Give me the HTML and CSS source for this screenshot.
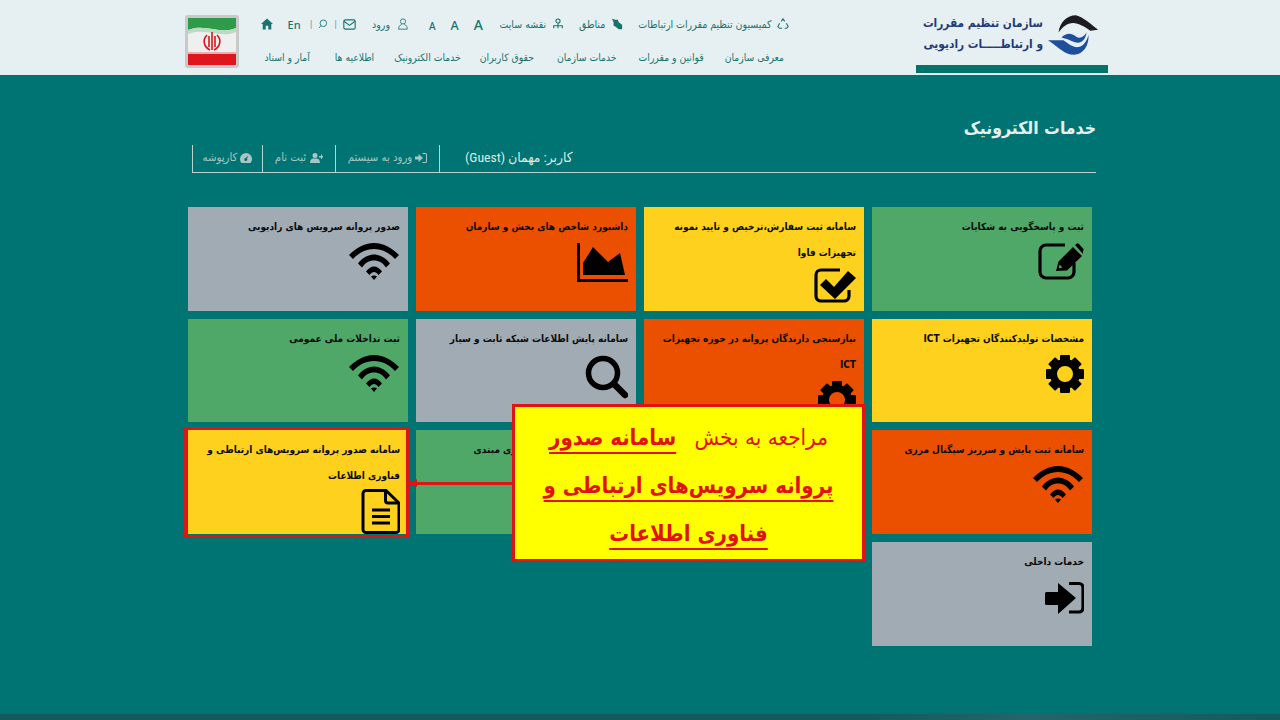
FILE: index.html
```html
<!DOCTYPE html>
<html lang="fa" dir="rtl">
<head>
<meta charset="utf-8">
<title>خدمات الکترونیک</title>
<link rel="stylesheet" href="styles.css">
</head>
<body>
<svg class="sprite" xmlns="http://www.w3.org/2000/svg">
  <symbol id="i-wifi" viewBox="0 0 52 48">
    <path d="M1 12C8 5 16 0 26 0S44 5 51 12L47 16C41 9.500 34 6 26 6S11 9.500 5 16Z"/>
    <path d="M10 20.500C14 15 20 11.500 26 11.500S38 15 42 20.500L38 24.500C35 20 31 17.500 26 17.500S17 20 14 24.500Z"/>
    <path d="M18 28.500C20 25.500 23 23.500 26 23.500S32 25.500 34 28.500L30.500 32C29 30 27.500 29 26 29S23 30 21.500 32Z"/>
    <path d="M23 33.500C24.500 32 27.500 32 29 33.500L26 37Z"/>
  </symbol>
  <symbol id="i-gear" viewBox="0 0 52 48">
    <g transform="translate(33 19)">
      <circle r="11.5" fill="none" stroke="currentColor" stroke-width="7"/>
      <rect x="-5" y="-19" width="10" height="7" rx="1"/>
      <rect x="-5" y="-19" width="10" height="7" rx="1" transform="rotate(45)"/>
      <rect x="-5" y="-19" width="10" height="7" rx="1" transform="rotate(90)"/>
      <rect x="-5" y="-19" width="10" height="7" rx="1" transform="rotate(135)"/>
      <rect x="-5" y="-19" width="10" height="7" rx="1" transform="rotate(180)"/>
      <rect x="-5" y="-19" width="10" height="7" rx="1" transform="rotate(225)"/>
      <rect x="-5" y="-19" width="10" height="7" rx="1" transform="rotate(270)"/>
      <rect x="-5" y="-19" width="10" height="7" rx="1" transform="rotate(315)"/>
    </g>
  </symbol>
</svg>

<header class="top">
  <div class="brand">
    <div class="brand-main">
      <svg class="brand-mark" viewBox="0 0 54 44" xmlns="http://www.w3.org/2000/svg">
        <path fill="#1c1c22" d="M11 19C12 8 20 1 29 1C37 3 44 10 52 16L44 17C38 13 32 9 26 9C20 9 15 13 11 19Z"/>
        <path fill="#1d4f9c" d="M0 27H16C22 31 26 35 32 34C37 33 41 27 42 21C43 33 36 42 27 42C17 42 12 35 0 27Z"/>
        <path fill="#1d4f9c" d="M14 24C19 19 24 19 29 23C33 26 37 24 40 19C39 27 34 31 28 29C23 27 19 25 14 24Z"/>
      </svg>
      <div class="brand-text">
        <div>سازمان تنظیم مقررات</div>
        <div>و ارتباطـــــات رادیویی</div>
      </div>
    </div>
    <div class="brand-bar"></div>
  </div>

  <nav class="nav">
    <div class="nav-top">
      <a class="tool" href="#">
        <svg class="nico" viewBox="0 0 14 14" fill="none" stroke="currentColor" stroke-width="1.3"><path d="M5 4L7 1L9 4M11 6L13 10L11 12H9M3 6L1 10L3 12H6"/></svg>
        <span>کمیسیون تنظیم مقررات ارتباطات</span>
      </a>
      <a class="tool" href="#">
        <svg class="nico" viewBox="0 0 14 14"><path fill="currentColor" d="M1 1L5 2L8 2L9 5L13 8L13 13L9 13L5 10L3 9L3 5Z"/></svg>
        <span>مناطق</span>
      </a>
      <a class="tool" href="#">
        <svg class="nico" viewBox="0 0 14 14" fill="none" stroke="currentColor" stroke-width="1.3"><circle cx="7" cy="3.5" r="2.4"/><path d="M7 6V9M2 12V9H12V12M7 9V12"/></svg>
        <span>نقشه سایت</span>
      </a>
      <div class="sizes">
        <span class="a-lg">A</span><span class="a-md">A</span><span class="a-sm">A</span>
      </div>
      <a class="tool tool-login" href="#">
        <svg class="nico" viewBox="0 0 14 14" fill="none" stroke="currentColor" stroke-width="1"><circle cx="7" cy="4" r="3"/><path d="M5.5 7.5C3 8.5 2 10 2 13H12C12 10 11 8.5 8.5 7.5"/></svg>
        <span>ورود</span>
      </a>
      <svg class="nico mail" viewBox="0 0 14 12" fill="none" stroke="currentColor" stroke-width="1.2"><rect x=".8" y="1" width="12.4" height="10" rx="1.5"/><path d="M1 2.5L7 7L13 2.5"/></svg>
      <span class="sep">|</span>
      <svg class="nico search" viewBox="0 0 14 14" fill="none" stroke="currentColor" stroke-width="1.2"><circle cx="7.5" cy="6" r="4.6"/><path d="M4 9.5L1.5 12.5"/></svg>
      <span class="sep">|</span>
      <a class="lang" href="#">En</a>
      <svg class="nico home" viewBox="0 0 14 13"><path fill="currentColor" d="M7 0L14 6.5H12V13H8.5V8.5H5.5V13H2V6.5H0Z"/></svg>
    </div>
    <div class="nav-main">
      <a href="#">معرفی سازمان</a>
      <a href="#">قوانین و مقررات</a>
      <a href="#">خدمات سازمان</a>
      <a href="#">حقوق کاربران</a>
      <a href="#">خدمات الکترونیک</a>
      <a href="#">اطلاعیه ها</a>
      <a href="#">آمار و اسناد</a>
    </div>
  </nav>

  <svg class="flag" viewBox="0 0 54 53" xmlns="http://www.w3.org/2000/svg">
    <rect width="54" height="53" rx="3" fill="#c9c9c9"/>
    <rect x="3" y="3" width="48" height="47" fill="#efefef"/>
    <path d="M3 3H51V13C36 20 20 8 3 15Z" fill="#2e9b4a"/>
    <path d="M3 15C20 8 36 20 51 13V17C36 24 20 12 3 19Z" fill="#bcd9c2"/>
    <rect x="3" y="39" width="48" height="11" fill="#e0161e"/>
    <rect x="3" y="37" width="48" height="2" fill="#e9b0b0"/>
    <g fill="none" stroke="#d8141c" stroke-width="1.6">
      <path d="M27 17V35"/>
      <path d="M22 20C17 25 19 32 25 35"/>
      <path d="M32 20C37 25 35 32 29 35"/>
      <path d="M24 21V32M30 21V32"/>
    </g>
  </svg>
</header>

<main class="main">
  <h1 class="title">خدمات الکترونیک</h1>

  <div class="userbar">
    <a class="ub-cell ub-dash" href="#">
      <svg class="ub-ico" viewBox="0 0 12 10"><path fill="currentColor" d="M6 0A6 6 0 0 0 0 6C0 7.5.5 8.8 1.400 10H10.600C11.500 8.800 12 7.500 12 6A6 6 0 0 0 6 0ZM6 8A1.500 1.500 0 0 1 5.500 5L8.500 2.500L7 5.500A1.500 1.500 0 0 1 6 8Z"/></svg>
      <span>کارپوشه</span>
    </a>
    <a class="ub-cell ub-reg" href="#">
      <svg class="ub-ico ub-ico-wide" viewBox="0 0 14 10"><path fill="currentColor" d="M6 0A2.500 2.500 0 1 1 6 5A2.500 2.500 0 0 1 6 0ZM1 10C1 7 2.500 5.500 4 5.500H8C9.500 5.500 11 7 11 10ZM10 3H12V1.500H13V3H14V4.500H13V6H12V4.500H10Z"/></svg>
      <span>ثبت نام</span>
    </a>
    <a class="ub-cell ub-login" href="#">
      <svg class="ub-ico" viewBox="0 0 12 10"><path fill="currentColor" d="M0 3.500H3.500V1L8 5L3.500 9V6.500H0ZM7.500 0H10.500A1.500 1.500 0 0 1 12 1.500V8.500A1.500 1.500 0 0 1 10.500 10H7.500V9H10.500A.5.5 0 0 0 11 8.500V1.500A.5.5 0 0 0 10.500 1H7.500Z"/></svg>
      <span>ورود به سیستم</span>
    </a>
    <div class="ub-user">کاربر: مهمان (Guest)</div>
  </div>

  <section class="grid">
    <a class="card green" href="#">
      <h2>ثبت و پاسخگویی به شکایات</h2>
      <svg class="icon" viewBox="0 0 52 48">
        <path fill="none" stroke="currentColor" stroke-width="3.200" d="M33 2H14A6 6 0 0 0 8 8V29A6 6 0 0 0 14 35H36A6 6 0 0 0 42 29V20"/>
        <path fill-rule="evenodd" d="M24 28L26.500 18.500L41 4L50 13L35 27.500ZM27.500 21.500L26.800 25.300L30.500 24.500Z"/>
        <path d="M43 2L45 .5Q46 0 47 1L51.500 6Q52 7 51 8L51 11Z"/>
      </svg>
    </a>
    <a class="card yellow" href="#">
      <h2>سامانه ثبت سفارش،ترخیص و تایید نمونه تجهیزات فاوا</h2>
      <svg class="icon icon-up" viewBox="0 0 52 48">
        <path fill="none" stroke="currentColor" stroke-width="3.200" d="M36 2H17A5 5 0 0 0 12 7V28A5 5 0 0 0 17 33H40A5 5 0 0 0 45 28V22"/>
        <path d="M16 17L22 11L30 19L44 3L52 10L31 31Z"/>
      </svg>
    </a>
    <a class="card orange" href="#">
      <h2>داشبورد شاخص های بخش و سازمان</h2>
      <svg class="icon" viewBox="0 0 52 48">
        <path d="M1 0H4V36H52V39H1Z"/>
        <path d="M7 20L17 4L32 19L44 10L49 32H7Z"/>
      </svg>
    </a>
    <a class="card grey" href="#">
      <h2>صدور پروانه سرویس های رادیویی</h2>
      <svg class="icon"><use href="#i-wifi"/></svg>
    </a>

    <a class="card yellow" href="#">
      <h2>مشخصات تولیدکنندگان تجهیزات ICT</h2>
      <svg class="icon"><use href="#i-gear"/></svg>
    </a>
    <a class="card orange" href="#">
      <h2>نیازسنجی دارندگان پروانه در حوزه تجهیزات ICT</h2>
      <svg class="icon"><use href="#i-gear"/></svg>
    </a>
    <a class="card grey" href="#">
      <h2>سامانه پایش اطلاعات شبکه ثابت و سیار</h2>
      <svg class="icon" viewBox="0 0 52 48">
        <circle cx="27" cy="18" r="14.500" fill="none" stroke="currentColor" stroke-width="5.500"/>
        <path d="M39 30L49 40" fill="none" stroke="currentColor" stroke-width="6.500" stroke-linecap="round"/>
      </svg>
    </a>
    <a class="card green" href="#">
      <h2>ثبت تداخلات ملی عمومی</h2>
      <svg class="icon"><use href="#i-wifi"/></svg>
    </a>

    <a class="card orange" href="#">
      <h2>سامانه ثبت پایش و سرریز سیگنال مرزی</h2>
      <svg class="icon"><use href="#i-wifi"/></svg>
    </a>
    <div class="card yellow"></div>
    <a class="card green" href="#">
      <h2>سامانه ثبت اطلاعات فناوری مبتدی</h2>
    </a>
    <a class="card yellow" href="#">
      <h2>سامانه صدور پروانه سرویس‌های ارتباطی و فناوری اطلاعات</h2>
      <svg class="icon icon-file" viewBox="0 0 52 45">
        <g fill="none" stroke="currentColor" stroke-width="3">
          <path d="M38 1.500H18A3 3 0 0 0 15 4.500V40.500A3 3 0 0 0 18 43.500H48A3 3 0 0 0 51 40.500V14Z"/>
          <path d="M37.500 1.500V11.500A2.500 2.500 0 0 0 40 14H51"/>
          <path d="M24 21H42M24 27.500H42M24 34H42"/>
        </g>
      </svg>
    </a>

    <a class="card grey" href="#">
      <h2>خدمات داخلی</h2>
      <svg class="icon" viewBox="0 0 52 48">
        <path d="M13 15.500A1.500 1.500 0 0 1 14.500 14H26V5L44 20L26 36V27H14.500A1.500 1.500 0 0 1 13 25.500Z"/>
        <path fill="none" stroke="currentColor" stroke-width="3.200" d="M37 5.500H47A4 4 0 0 1 51 9.500V30A4 4 0 0 1 47 34H37"/>
      </svg>
    </a>
  </section>

  <div class="highlight"></div>
  <div class="arrow"></div>
  <aside class="callout"><span class="callout-lead">مراجعه به بخش</span> <strong>سامانه صدور<br>پروانه سرویس‌های ارتباطی و<br>فناوری اطلاعات</strong></aside>
</main>

<footer class="band"></footer>
</body>
</html>
```

FILE: styles.css
```css
* { box-sizing: border-box; }
html, body { margin: 0; height: 100%; }
body {
  position: relative;
  display: flex;
  flex-direction: column;
  height: 720px;
  overflow: hidden;
  background: #007472;
  font-family: "DejaVu Sans", "Noto Sans", sans-serif;
  font-stretch: condensed;
  color: #000;
}
a { color: inherit; text-decoration: none; }
.sprite { display: none; }

/* header */
.top {
  display: flex;
  height: 75px;
  flex: none;
  padding: 0 172px 0 185px;
  background: #e6f0f2;
  color: #17736f;
}
.brand { display: flex; flex-direction: column; width: 192px; flex: none; }
.brand-main {
  display: flex;
  align-items: center;
  gap: 5px;
  height: 65px;
  padding: 6px 8px 0 0;
}
.brand-mark { width: 52px; height: 43px; flex: none; }
.brand-text {
  font-size: 11.800px;
  font-weight: 700;
  line-height: 21px;
  color: #233a78;
  white-space: nowrap;
  margin-top: -4px;
}
.brand-bar { height: 8px; background: #00736b; }

.nav { margin-right: 127px; display: flex; flex-direction: column; padding-top: 16px; gap: 17px; }
.nav-top, .nav-main { display: flex; align-items: center; height: 16px; white-space: nowrap; font-size: 10.500px; }
.nav-main { padding-right: 5px; font-size: 10.300px; }
.nav-main a:nth-child(1) { margin-left: 21px; }
.nav-main a:nth-child(2) { margin-left: 22px; }
.nav-main a:nth-child(3) { margin-left: 23px; }
.nav-main a:nth-child(4) { margin-left: 19px; }
.nav-main a:nth-child(5) { margin-left: 20px; }
.nav-main a:nth-child(6) { margin-left: 25px; }
.tool { display: flex; align-items: center; gap: 5.500px; margin-left: 15.500px; }
.tool-login { margin-left: 16px; gap: 7px; }
.nico { width: 12px; height: 12px; flex: none; display: block; }
.sizes {
  display: flex;
  align-items: baseline;
  gap: 15px;
  margin: 0 1px 0 20px;
  font-family: "Noto Sans", sans-serif;
  font-weight: 500;
}
.a-lg { font-size: 14px; }
.a-md { font-size: 12.500px; }
.a-sm { font-size: 10px; }
.sep { font-size: 9px; opacity: .7; margin: 0 6px; }
.mail { width: 13px; height: 11px; }
.search { width: 10px; height: 10px; }
.lang { font-family: "Noto Sans", sans-serif; font-size: 11px; font-weight: 500; margin: 0 3px 0 15px; }
.flag { width: 54px; height: 53px; margin-right: auto; margin-top: 15px; flex: none; }

/* main */
.main { flex: 1; padding: 36px 184px 0 192px; }
.title {
  margin: 0;
  height: 34px;
  font-size: 17.500px;
  line-height: 34px;
  font-weight: 700;
  color: #e6f0f0;
}
.userbar {
  display: flex;
  direction: ltr;
  height: 28px;
  border-bottom: 1px solid #b9d3d3;
  font-size: 11.300px;
  color: #a7c6c6;
}
.ub-cell {
  direction: rtl;
  display: flex;
  align-items: center;
  justify-content: center;
  gap: 3px;
  height: 27px;
  padding-bottom: 2px;
  border-left: 1px solid #b9d3d3;
}
.ub-dash { width: 70px; }
.ub-reg { width: 73px; }
.ub-login { width: 104px; }
.ub-ico { width: 12px; height: 10px; flex: none; }
.ub-ico-wide { width: 14px; }
.ub-user {
  direction: rtl;
  height: 27px;
  line-height: 25px;
  border-left: 1px solid #b9d3d3;
  padding: 0 25px;
  font-family: Roboto, "DejaVu Sans", sans-serif;
  font-size: 13.700px;
  color: #dfeaea;
}

.grid {
  display: grid;
  grid-template-columns: repeat(4, 220px);
  grid-auto-rows: 103.670px;
  gap: 8px;
  margin: 34px 4px 0 -4px;
}
.card { display: block; padding: 7px 8px 6px; }
.card h2 { margin: 0; font-size: 10px; line-height: 26px; font-weight: 700; color: #0c0c0c; }
.green { background: #4fa868; }
.yellow { background: #fed11f; }
.orange { background: #ea5000; }
.grey { background: #a0abb3; }
.icon { display: block; width: 52px; height: 48px; margin-top: 3px; fill: currentColor; color: #000; }
.icon-up { margin-top: 2px; }
.icon-file { height: 45px; margin-top: 0; }

/* annotation overlay */
.highlight {
  position: absolute;
  left: 184px;
  top: 427px;
  width: 225px;
  height: 111px;
  border: solid #dd1515;
  border-width: 3px 3px 3px 4px;
}
.arrow {
  position: absolute;
  left: 410px;
  top: 482px;
  width: 103px;
  height: 3px;
  background: #dd1515;
}
.arrow::before {
  content: "";
  position: absolute;
  left: 0;
  top: -3px;
  border-style: solid;
  border-width: 4.500px 7px 4.500px 0;
  border-color: transparent #dd1515 transparent transparent;
}
.callout {
  position: absolute;
  left: 512px;
  top: 404px;
  width: 353px;
  height: 158px;
  padding: 6px 10px 0;
  border: 3px solid #e01212;
  background: #ffff00;
  color: #e01212;
  font-size: 22px;
  line-height: 48px;
  text-align: center;
}
.callout-lead { margin-left: 12px; font-size: 22.300px; }
.callout strong {
  text-decoration: underline;
  text-decoration-thickness: 2px;
  text-underline-offset: 6.500px;
}

.band {
  height: 6px;
  flex: none;
  background: linear-gradient(90deg, #145a5c 0 68%, #23656a 80%, #145a5c 100%);
}
```
